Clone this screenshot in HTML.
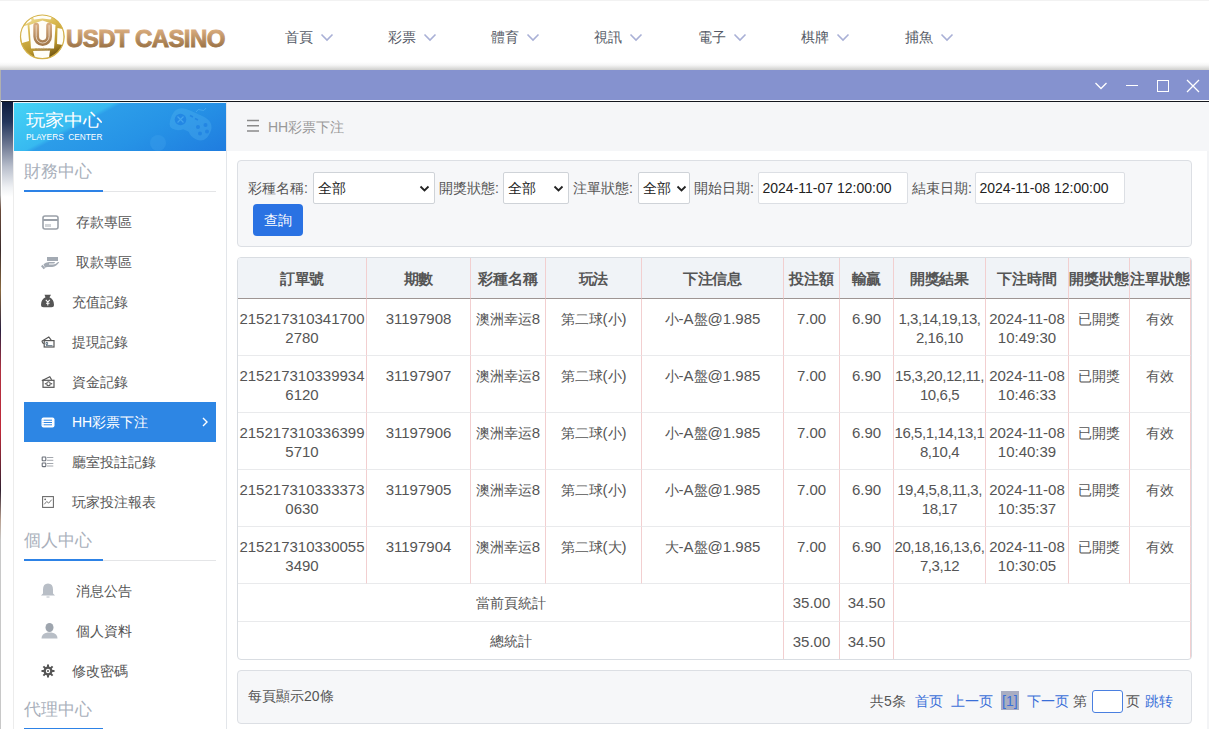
<!DOCTYPE html>
<html><head><meta charset="utf-8">
<style>
*{box-sizing:border-box;margin:0;padding:0}
html,body{width:1209px;height:729px;overflow:hidden;background:#fff;font-family:"Liberation Sans",sans-serif;color:#333}
.abs{position:absolute}
#hdr{position:absolute;left:0;top:0;width:1209px;height:70px;background:linear-gradient(#fff 0,#fff 62px,#f6f6f6 65px,#cfcfcd 70px)}
.nav{position:absolute;top:29px;font-size:14px;color:#555a66;white-space:nowrap}
.nav svg{position:absolute;left:35px;top:4px}
#win{position:absolute;left:1px;top:70px;width:1208px;height:30px;background:#8592cf}
#line{position:absolute;left:1px;top:100px;width:1208px;height:2px;background:#fff;border-bottom:1px solid #14171e}
#side{position:absolute;left:13px;top:102px;width:214px;height:627px;background:#fff;border-right:1px solid #e3e6ea;border-left:1px solid #ececec}
#banner{position:absolute;left:0;top:0;width:212px;height:49px;background:linear-gradient(152deg,#45d4f6 0%,#37b9f0 33%,#2c9de9 36%,#2693e6 62%,#1f7cdf 100%);overflow:hidden;border-top:1px solid #e8f4fc}
.sec{position:absolute;left:10px;font-size:17px;color:#a9b0bb}
.secl{position:absolute;left:10px;width:192px;height:2px;border-bottom:1px solid #e4e5e7}
.secl i{position:absolute;left:0;top:0;width:79px;height:2px;background:#2d82e6}
.mi{position:absolute;left:10px;width:192px;height:40px;font-size:14px;color:#555}
.mi span{position:absolute;top:12px}
.mi svg{position:absolute}
.mi.act{background:#2d86e4;color:#fff}
#main{position:absolute;left:227px;top:102px;width:982px;height:627px;background:#fff}
#bc{position:absolute;left:0;top:0;width:982px;height:49px;background:#f5f6f8;font-size:14px;color:#999}
.panel{position:absolute;background:#f6f7f9;border:1px solid #dcdfe4;border-radius:4px}
.lbl{position:absolute;font-size:14px;color:#555;top:19px}
.sel{position:absolute;top:11px;height:32px;background:#fff;border:1px solid #cfd3d8;border-radius:2px;font-size:14px;color:#222}
.sel span{position:absolute;left:4px;top:7px}
.sel svg{position:absolute;right:4px;top:12px}
.btn{position:absolute;left:15px;top:43px;width:50px;height:32px;background:#2a72e3;border-radius:4px;color:#fff;font-size:14px;text-align:center;line-height:32px}
#tbl{position:absolute;left:237px;top:257px;width:955px;height:403px;border:1px solid #d9dde2;border-radius:4px;overflow:hidden;background:#fff}
#tbl table{width:953px;border-collapse:separate;border-spacing:0;table-layout:fixed}
th{background:#f0f3f7;font-weight:bold;font-size:15px;color:#555;height:41px;border-bottom:1px solid #9e9593;border-right:1px solid #f2cfd0;text-align:center;white-space:nowrap;overflow:hidden;padding-top:2px;letter-spacing:-0.2px}
td{font-size:15px;color:#555;text-align:center;vertical-align:top;border-right:1px solid #f2cfd0;border-bottom:1px solid #e9eaec;line-height:19px;padding-top:10px;white-space:nowrap;overflow:hidden}
tr.r td{height:57px}
tr.s td{height:38px;vertical-align:middle;padding-top:0}
tr.r td:nth-child(8){letter-spacing:-0.42px;overflow:visible}
.blue{color:#3a6fd8}
i.c{font-style:normal;font-size:14px}
</style></head><body>
<div id="hdr">
  <div class="abs" style="left:0;top:0;width:1209px;height:1px;background:#f2f2f2"></div>
  <svg class="abs" style="left:19px;top:13px" width="48" height="48" viewBox="0 0 48 48">
    <defs>
      <linearGradient id="g1" x1="0.2" y1="0" x2="0.6" y2="1"><stop offset="0" stop-color="#f4e6a6"/><stop offset=".35" stop-color="#d9b84e"/><stop offset=".75" stop-color="#b8952c"/><stop offset="1" stop-color="#6e5210"/></linearGradient>
      <linearGradient id="g2" x1="0" y1="0" x2="0" y2="1"><stop offset="0" stop-color="#d6aa7e"/><stop offset="1" stop-color="#a47a4c"/></linearGradient>
    </defs>
    <circle cx="23.3" cy="23.8" r="22" fill="url(#g1)"/>
    <g fill="#fffef8">
      <path d="M13 2.2 Q23 0 34 2.2 L31.5 6.5 L23.5 5.5 L15 6.5 Z"/>
      <path d="M2.5 14 L8.5 12 L10 28 L3 30 Q0.8 22 2.5 14 Z"/>
      <path d="M38.5 15 L43.5 16 Q46 24 44 32 L38 31 Z"/>
      <path d="M14 38 L31 37.5 L30 44.8 Q23 46.5 16 45 Z"/>
      <path d="M6 7.5 L12 4 L12.5 8 L7 11 Z"/>
      <path d="M10.5 12 L23.5 7.5 L36.5 12 L35 35.5 L12 35.5 Z"/>
    </g>
    <circle cx="23.3" cy="23.8" r="21.8" fill="none" stroke="#d4b24a" stroke-width="1.2"/>
    <path d="M17.2 12.6 v11 a6.45 6.45 0 0 0 12.9 0 v-11" fill="none" stroke="url(#g2)" stroke-width="5.8" stroke-linecap="round"/>
    <path d="M17.2 12.6 v11 a6.45 6.45 0 0 0 12.9 0 v-11" fill="none" stroke="#f3e6d8" stroke-width="0.8" stroke-linecap="round"/>
    <text x="23.5" y="37.5" font-size="5.5" text-anchor="middle" fill="#b09070" font-family="Liberation Sans">casino</text>
  </svg>
  <svg class="abs" style="left:60px;top:20px" width="175" height="34" viewBox="0 0 175 34">
    <defs><linearGradient id="g3" x1="0" y1="0" x2="0" y2="1"><stop offset="0.2" stop-color="#d8ab7d"/><stop offset="0.85" stop-color="#9b7346"/></linearGradient></defs>
    <text x="6" y="26.5" font-size="24" font-weight="bold" font-family="Liberation Sans" letter-spacing="-0.6" fill="url(#g3)" stroke="url(#g3)" stroke-width="0.9">USDT CASINO</text>
  </svg>
  <div class="nav" style="left:285px">首頁<svg width="14" height="9" viewBox="0 0 14 9"><path d="M1.5 1.5 L7 7 L12.5 1.5" fill="none" stroke="#a9b0d6" stroke-width="1.6"/></svg></div>
  <div class="nav" style="left:388px">彩票<svg width="14" height="9" viewBox="0 0 14 9"><path d="M1.5 1.5 L7 7 L12.5 1.5" fill="none" stroke="#a9b0d6" stroke-width="1.6"/></svg></div>
  <div class="nav" style="left:491px">體育<svg width="14" height="9" viewBox="0 0 14 9"><path d="M1.5 1.5 L7 7 L12.5 1.5" fill="none" stroke="#a9b0d6" stroke-width="1.6"/></svg></div>
  <div class="nav" style="left:594px">視訊<svg width="14" height="9" viewBox="0 0 14 9"><path d="M1.5 1.5 L7 7 L12.5 1.5" fill="none" stroke="#a9b0d6" stroke-width="1.6"/></svg></div>
  <div class="nav" style="left:698px">電子<svg width="14" height="9" viewBox="0 0 14 9"><path d="M1.5 1.5 L7 7 L12.5 1.5" fill="none" stroke="#a9b0d6" stroke-width="1.6"/></svg></div>
  <div class="nav" style="left:801px">棋牌<svg width="14" height="9" viewBox="0 0 14 9"><path d="M1.5 1.5 L7 7 L12.5 1.5" fill="none" stroke="#a9b0d6" stroke-width="1.6"/></svg></div>
  <div class="nav" style="left:905px">捕魚<svg width="14" height="9" viewBox="0 0 14 9"><path d="M1.5 1.5 L7 7 L12.5 1.5" fill="none" stroke="#a9b0d6" stroke-width="1.6"/></svg></div>
</div>
<div id="win">
  <svg class="abs" style="left:1093px;top:11px" width="14" height="10" viewBox="0 0 14 10"><path d="M1.5 2 L7 7.5 L12.5 2" fill="none" stroke="#fff" stroke-width="1.3"/></svg>
  <div class="abs" style="left:1125px;top:15px;width:12px;height:1.3px;background:#fff"></div>
  <div class="abs" style="left:1156px;top:10px;width:12px;height:12px;border:1.3px solid #fff"></div>
  <svg class="abs" style="left:1185px;top:9px" width="14" height="14" viewBox="0 0 14 14"><path d="M1 1 L13 13 M13 1 L1 13" fill="none" stroke="#fff" stroke-width="1.3"/></svg>
</div>
<div id="line"></div>
<div class="abs" style="left:0;top:70px;width:1px;height:659px;background:linear-gradient(#b0b0b0 0,#b0b0b0 125px,#6a4a3a 140px,#3a2a2a 180px,#8a6a40 220px,#2a2040 260px,#b03040 300px,#c02838 360px,#302030 420px,#b8a090 450px,#c8c8c8 470px,#c8c8c8 100%)"></div>
<div class="abs" style="left:2px;top:102px;width:11px;height:95px;background:linear-gradient(#0d1c3e 0,#24365c 20px,#6a7590 42px,#b9bfcc 65px,#eef0f3 85px,#fff 95px)"></div>
<div id="side">
  <div id="banner">
    <svg class="abs" style="left:0;top:-1px" width="212" height="49" viewBox="14 102 212 49">
      <g transform="rotate(24 191 124)">
        <path d="M170 124 q0 -12 14 -12 h14 q14 0 14 12 q0 12 -10 12 q-6 0 -10 -4 h-6 q-4 4 -10 4 q-6 0 -6 -12 z" fill="#5ab8f2" opacity=".3"/>
      </g>
      <circle cx="180.5" cy="119.5" r="5.8" fill="#1e80e2" opacity=".75"/>
      <path d="M177.5 116.5 l6 6 M183.5 116.5 l-6 6" stroke="#4aaaf0" stroke-width="1.2" opacity=".8"/>
      <g fill="#1e80e2" opacity=".75"><circle cx="198" cy="127" r="2"/><circle cx="205.5" cy="125" r="2"/><circle cx="200" cy="133.5" r="2"/><circle cx="207" cy="131.5" r="2"/></g>
      <path d="M190 115.5 l3 1.5 M195 118.5 l3 1.5" stroke="#1e80e2" stroke-width="1.6" opacity=".75"/>
      <path d="M196 112 q2 -4 5 -2 q3 2 5 -2" fill="none" stroke="#5ab8f2" stroke-width="1" opacity=".5"/>
      <circle cx="158" cy="143" r="8" fill="#4aaaf0" opacity=".25"/>
    </svg>
    <div class="abs" style="left:12px;top:8px;font-size:19px;color:#fff;line-height:22px;transform:scaleY(0.88);transform-origin:0 0">玩家中心</div>
    <div class="abs" style="left:12px;top:29px;font-size:8.3px;color:#fff;line-height:10px">PLAYERS&nbsp; CENTER</div>
  </div>
  <div class="sec" style="top:58px">財務中心</div>
  <div class="secl" style="top:88px"><i></i></div>
  <div class="mi" style="top:100px">
    <svg style="left:18px;top:13px" width="17" height="15" viewBox="0 0 17 15"><rect x="1" y="1" width="15" height="13" rx="2" fill="none" stroke="#9aa0a8" stroke-width="1.6"/><rect x="1" y="4" width="15" height="2" fill="#9aa0a8"/><path d="M4 9v3M6 9v3M8 9v3" stroke="#9aa0a8" stroke-width="0.9"/></svg>
    <span style="left:52px">存款專區</span></div>
  <div class="mi" style="top:140px">
    <svg style="left:16px;top:13px" width="20" height="15" viewBox="0 0 20 15"><rect x="7" y="2" width="11" height="4" fill="#a3aab3"/><path d="M3.5 9.2 q2 -2.2 5.5 -2.3 h5 q1.3 0 1 0.9 q-0.3 0.7 -1.5 0.7 h-4.5 v1.1 h4 q2.5 0 5 -2.5 q0.8 -0.5 1.2 0.2 q-2.5 4.2 -7 4.6 h-4.5 q-1.6 0 -2.8 0.8 z" fill="#a3aab3"/><path d="M1.8 10.5 l2.6 3.2" stroke="#a3aab3" stroke-width="2"/></svg>
    <span style="left:52px">取款專區</span></div>
  <div class="mi" style="top:180px">
    <svg style="left:17px;top:12px" width="14" height="14" viewBox="0 0 14 14"><path d="M3.5 0.8 h6.5 l-1.5 2.5 q4.5 2.2 4.5 7.5 q0 2.5 -2.5 2.5 h-8 q-2.5 0 -2.5 -2.5 q0 -5.3 4.5 -7.5 z" fill="#555"/><path d="M4.8 5.8 l2 2.2 l2 -2.2 M6.8 8 v3.5 M5 9.3 h3.6" stroke="#fff" stroke-width="1.1" fill="none"/></svg>
    <span style="left:48px">充值記錄</span></div>
  <div class="mi" style="top:220px">
    <svg style="left:17px;top:14px" width="14" height="12" viewBox="0 0 14 12"><path d="M0.8 5.2 L7.8 1 L10.2 4.2" fill="none" stroke="#555" stroke-width="1.2"/><path d="M0.8 5.2 L2.6 8" fill="none" stroke="#555" stroke-width="1.2"/><rect x="3.2" y="4.6" width="9.8" height="6.4" fill="#fff" stroke="#555" stroke-width="1.2"/><path d="M5 6.5 h1.6 v2 h-1.6 z M5 9.6 h6.5" fill="none" stroke="#5a6f80" stroke-width="0.9"/></svg>
    <span style="left:48px">提現記錄</span></div>
  <div class="mi" style="top:260px">
    <svg style="left:17px;top:14px" width="14" height="12" viewBox="0 0 14 12"><path d="M0.8 4.8 L8.8 0.8 L10.6 3.8" fill="none" stroke="#555" stroke-width="1.2"/><rect x="2" y="4.3" width="11" height="7" fill="#fff" stroke="#555" stroke-width="1.2"/><ellipse cx="7.5" cy="7.8" rx="1.8" ry="2" fill="none" stroke="#555" stroke-width="1.1"/><circle cx="4.4" cy="7.8" r=".7" fill="#555"/><circle cx="10.6" cy="7.8" r=".7" fill="#555"/></svg>
    <span style="left:48px">資金記錄</span></div>
  <div class="mi act" style="top:300px">
    <svg style="left:17px;top:15px" width="14" height="11" viewBox="0 0 14 11"><rect x="0.5" y="0.5" width="13" height="10" rx="2" fill="#fff"/><path d="M3 3.2h8M3 5.5h8M3 7.8h8" stroke="#2d86e4" stroke-width="1"/><path d="M1.8 3.2h.6M1.8 5.5h.6M1.8 7.8h.6" stroke="#2d86e4" stroke-width="1"/></svg>
    <span style="left:48px">HH彩票下注</span>
    <svg style="left:177px;top:14px" width="8" height="12" viewBox="0 0 8 12"><path d="M2 2 L6 6 L2 10" fill="none" stroke="#fff" stroke-width="1.4"/></svg></div>
  <div class="mi" style="top:340px">
    <svg style="left:17px;top:14px" width="13" height="12" viewBox="0 0 13 12"><rect x="1.2" y="1" width="3.6" height="3.8" rx=".5" fill="none" stroke="#6a6f78" stroke-width="1.1"/><rect x="1.2" y="7" width="3.6" height="3.6" rx=".5" fill="none" stroke="#6a6f78" stroke-width="1.1"/><path d="M6 1.5h6.3M6 4.3h6.3M6 7.5h6.3M6 10h6.3" stroke="#9a9ea5" stroke-width="0.9"/></svg>
    <span style="left:48px">廳室投註記錄</span></div>
  <div class="mi" style="top:380px">
    <svg style="left:18px;top:14px" width="12" height="12" viewBox="0 0 12 12"><rect x="0.6" y="0.6" width="10.8" height="10.8" fill="none" stroke="#666" stroke-width="1.05"/><path d="M2.3 8.3 l2.4 -2.8 l2 1.6 l3 -3.4 M3.2 2.6 v1.6 M2.4 3.4 h1.6" fill="none" stroke="#666" stroke-width="0.9"/></svg>
    <span style="left:48px">玩家投注報表</span></div>
  <div class="sec" style="top:427px">個人中心</div>
  <div class="secl" style="top:457px"><i></i></div>
  <div class="mi" style="top:469px">
    <svg style="left:16px;top:12px" width="16" height="16" viewBox="0 0 16 16"><path d="M8 0.5 q5 0 5 6 v4 l2 2 h-14 l2 -2 v-4 q0 -6 5 -6 z" fill="#b8bec6"/><path d="M6.5 14 h3" stroke="#b8bec6" stroke-width="1"/></svg>
    <span style="left:52px">消息公告</span></div>
  <div class="mi" style="top:509px">
    <svg style="left:17px;top:12px" width="17" height="16" viewBox="0 0 17 16"><ellipse cx="8.5" cy="4.5" rx="4" ry="4.5" fill="#9ea5ae"/><path d="M0.5 15.5 q0 -5 6 -6 h4 q6 1 6 6 z" fill="#b8bec6"/></svg>
    <span style="left:52px">個人資料</span></div>
  <div class="mi" style="top:549px">
    <svg style="left:17px;top:13px" width="14" height="14" viewBox="0 0 14 14"><g fill="#555"><circle cx="7" cy="7" r="4.5"/><rect x="6" y="0.5" width="2" height="13"/><rect x="0.5" y="6" width="13" height="2"/><rect x="6" y="0.5" width="2" height="13" transform="rotate(45 7 7)"/><rect x="6" y="0.5" width="2" height="13" transform="rotate(-45 7 7)"/></g><circle cx="7" cy="7" r="2.2" fill="#fff"/><circle cx="7" cy="7" r="1" fill="#555"/></svg>
    <span style="left:48px">修改密碼</span></div>
  <div class="sec" style="top:596px">代理中心</div>
  <div class="secl" style="top:626px"><i></i></div>
</div>
<div id="main">
  <div id="bc">
    <svg class="abs" style="left:20px;top:17px" width="13" height="13" viewBox="0 0 13 13"><path d="M0 1.5h12M0 6.8h12M0 12h12" stroke="#8a8a8a" stroke-width="1.4"/></svg>
    <span class="abs" style="left:41px;top:17px">HH彩票下注</span></div>
  <div class="abs" style="left:980px;top:49px;width:2px;height:578px;background:#f3f4f6"></div>
</div>
<div class="panel" style="left:237px;top:160px;width:955px;height:87px">
  <span class="lbl" style="left:10px">彩種名稱:</span>
  <div class="sel" style="left:75px;width:122px"><span>全部</span><svg width="11" height="8" viewBox="0 0 11 8"><path d="M1.5 1.5 L5.5 5.5 L9.5 1.5" fill="none" stroke="#222" stroke-width="1.8"/></svg></div>
  <span class="lbl" style="left:201px">開獎狀態:</span>
  <div class="sel" style="left:265px;width:66px"><span>全部</span><svg width="11" height="8" viewBox="0 0 11 8"><path d="M1.5 1.5 L5.5 5.5 L9.5 1.5" fill="none" stroke="#222" stroke-width="1.8"/></svg></div>
  <span class="lbl" style="left:335px">注單狀態:</span>
  <div class="sel" style="left:400px;width:52px"><span>全部</span><svg width="11" height="8" viewBox="0 0 11 8" style="right:2px"><path d="M1.5 1.5 L5.5 5.5 L9.5 1.5" fill="none" stroke="#222" stroke-width="1.8"/></svg></div>
  <span class="lbl" style="left:456px">開始日期:</span>
  <div class="sel" style="left:520px;width:150px;border-color:#dcdfe4"><span style="left:3.5px">2024-11-07 12:00:00</span></div>
  <span class="lbl" style="left:674px">結束日期:</span>
  <div class="sel" style="left:737px;width:150px;border-color:#dcdfe4"><span style="left:3.5px">2024-11-08 12:00:00</span></div>
  <div class="btn">查詢</div>
</div>
<div id="tbl"><table>
<colgroup><col style="width:129px"><col style="width:104px"><col style="width:75px"><col style="width:96px"><col style="width:142px"><col style="width:56px"><col style="width:54px"><col style="width:92px"><col style="width:83px"><col style="width:61px"><col style="width:61px"></colgroup>
<tr><th>訂單號</th><th>期數</th><th>彩種名稱</th><th>玩法</th><th>下注信息</th><th>投注額</th><th>輸贏</th><th>開獎結果</th><th>下注時間</th><th>開獎狀態</th><th>注單狀態</th></tr>
<tr class="r"><td>215217310341700<br>2780</td><td>31197908</td><td><i class="c">澳洲幸运</i>8</td><td><i class="c">第二球</i>(<i class="c">小</i>)</td><td><i class="c">小</i>-A<i class="c">盤</i>@1.985</td><td>7.00</td><td>6.90</td><td>1,3,14,19,13,<br>2,16,10</td><td>2024-11-08<br>10:49:30</td><td><i class="c">已開獎</i></td><td><i class="c">有效</i></td></tr>
<tr class="r"><td>215217310339934<br>6120</td><td>31197907</td><td><i class="c">澳洲幸运</i>8</td><td><i class="c">第二球</i>(<i class="c">小</i>)</td><td><i class="c">小</i>-A<i class="c">盤</i>@1.985</td><td>7.00</td><td>6.90</td><td>15,3,20,12,11,<br>10,6,5</td><td>2024-11-08<br>10:46:33</td><td><i class="c">已開獎</i></td><td><i class="c">有效</i></td></tr>
<tr class="r"><td>215217310336399<br>5710</td><td>31197906</td><td><i class="c">澳洲幸运</i>8</td><td><i class="c">第二球</i>(<i class="c">小</i>)</td><td><i class="c">小</i>-A<i class="c">盤</i>@1.985</td><td>7.00</td><td>6.90</td><td>16,5,1,14,13,1<br>8,10,4</td><td>2024-11-08<br>10:40:39</td><td><i class="c">已開獎</i></td><td><i class="c">有效</i></td></tr>
<tr class="r"><td>215217310333373<br>0630</td><td>31197905</td><td><i class="c">澳洲幸运</i>8</td><td><i class="c">第二球</i>(<i class="c">小</i>)</td><td><i class="c">小</i>-A<i class="c">盤</i>@1.985</td><td>7.00</td><td>6.90</td><td>19,4,5,8,11,3,<br>18,17</td><td>2024-11-08<br>10:35:37</td><td><i class="c">已開獎</i></td><td><i class="c">有效</i></td></tr>
<tr class="r"><td>215217310330055<br>3490</td><td>31197904</td><td><i class="c">澳洲幸运</i>8</td><td><i class="c">第二球</i>(<i class="c">大</i>)</td><td><i class="c">大</i>-A<i class="c">盤</i>@1.985</td><td>7.00</td><td>6.90</td><td>20,18,16,13,6,<br>7,3,12</td><td>2024-11-08<br>10:30:05</td><td><i class="c">已開獎</i></td><td><i class="c">有效</i></td></tr>
<tr class="s"><td colspan="5"><i class="c">當前頁統計</i></td><td>35.00</td><td>34.50</td><td colspan="4"></td></tr>
<tr class="s"><td colspan="5" style="border-bottom:none"><i class="c">總統計</i></td><td style="border-bottom:none">35.00</td><td style="border-bottom:none">34.50</td><td colspan="4" style="border-bottom:none"></td></tr>
</table></div>
<div class="panel" style="left:237px;top:670px;width:955px;height:54px">
  <span class="abs" style="left:10px;top:17px;font-size:14px;color:#555">每頁顯示20條</span>
  <span class="abs" style="left:632px;top:22px;font-size:14px;color:#555">共5条</span>
  <span class="abs blue" style="left:677px;top:22px;font-size:14px">首页</span>
  <span class="abs blue" style="left:713px;top:22px;font-size:14px">上一页</span>
  <span class="abs" style="left:763px;top:20px;width:18px;height:19px;background:#a9adc2"></span>
  <span class="abs blue" style="left:764px;top:22px;font-size:14px">[1]</span>
  <span class="abs blue" style="left:789px;top:22px;font-size:14px">下一页</span>
  <span class="abs" style="left:835px;top:22px;font-size:14px;color:#555">第</span>
  <span class="abs" style="left:854px;top:19px;width:31px;height:23px;background:#fff;border:1px solid #4a7fe0;border-radius:3px"></span>
  <span class="abs" style="left:888px;top:22px;font-size:14px;color:#555">页</span>
  <span class="abs blue" style="left:907px;top:22px;font-size:14px">跳转</span>
</div>
</body></html>
